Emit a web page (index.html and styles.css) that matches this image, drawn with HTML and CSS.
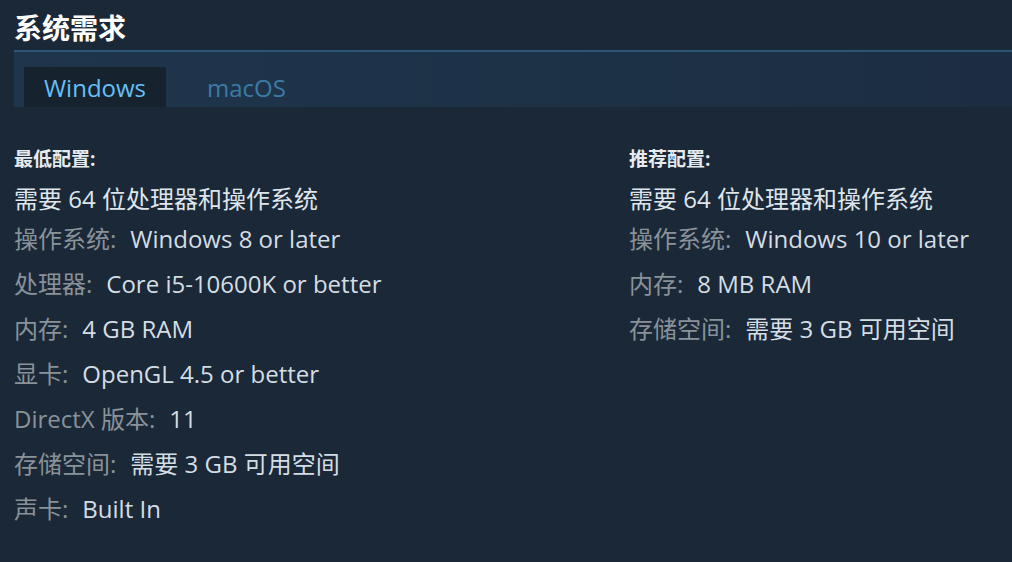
FILE: index.html
```html
<!DOCTYPE html>
<html lang="zh-CN">
<head>
<meta charset="utf-8">
<title>系统需求</title>
<link rel="stylesheet" href="styles.css">
</head>
<body>
<div class="sysreq">
  <h2 class="title">系统需求</h2>
  <div class="tabbar">
    <div class="tab active">Windows</div>
    <div class="tab">macOS</div>
  </div>
  <div class="columns">
    <div class="col col-min">
      <div class="col-head">最低配置:</div>
      <div class="req-note">需要 64 位处理器和操作系统</div>
      <ul class="reqs">
        <li><span class="lbl">操作系统:</span><span class="val">Windows 8 or later</span></li>
        <li><span class="lbl">处理器:</span><span class="val">Core i5-10600K or better</span></li>
        <li><span class="lbl">内存:</span><span class="val">4 GB RAM</span></li>
        <li><span class="lbl">显卡:</span><span class="val">OpenGL 4.5 or better</span></li>
        <li><span class="lbl">DirectX 版本:</span><span class="val">11</span></li>
        <li><span class="lbl">存储空间:</span><span class="val">需要 3 GB 可用空间</span></li>
        <li><span class="lbl">声卡:</span><span class="val">Built In</span></li>
      </ul>
    </div>
    <div class="col col-rec">
      <div class="col-head">推荐配置:</div>
      <div class="req-note">需要 64 位处理器和操作系统</div>
      <ul class="reqs">
        <li><span class="lbl">操作系统:</span><span class="val">Windows 10 or later</span></li>
        <li><span class="lbl">内存:</span><span class="val">8 MB RAM</span></li>
        <li><span class="lbl">存储空间:</span><span class="val">需要 3 GB 可用空间</span></li>
      </ul>
    </div>
  </div>
</div>
</body>
</html>
```
FILE: styles.css
```css
html, body {
  margin: 0;
  padding: 0;
  background: #1b2838;
  height: 100%;
}
body {
  font-family: "Open Sans", "Noto Sans CJK SC", sans-serif;
  color: #c6d4df;
  overflow: hidden;
}
.sysreq {
  padding-left: 14px;
}
.title {
  margin: 0;
  padding-top: 11px;
  height: 50px;
  box-sizing: border-box;
  font-size: 28px;
  line-height: 34px;
  font-weight: 700;
  color: #ffffff;
}
.tabbar {
  display: flex;
  align-items: flex-end;
  height: 57px;
  box-sizing: border-box;
  border-top: 2px solid #2c5676;
  background: linear-gradient(90deg, #1f354b 0%, #1d3247 50%, #1c2d41 100%);
  padding-left: 10px;
}
.tab {
  height: 40px;
  display: flex;
  align-items: center;
  justify-content: center;
  font-size: 24px;
  color: #3c7aa6;
  padding: 0 20px;
}
.tab.active {
  width: 142px;
  padding: 0;
  background: #17222f;
  color: #66c0f4;
  margin-right: 21px;
}
.columns {
  display: flex;
  padding-top: 40px;
}
.col-min {
  flex: 0 0 615px;
}
.col-rec {
  flex: 1 1 auto;
  min-width: 0;
}
.col-head {
  font-size: 19px;
  font-weight: 700;
  color: #e6ebef;
  line-height: 24px;
}
.req-note {
  font-size: 24px;
  line-height: 34px;
  margin-top: 11px;
  color: #dfe5ea;
}
.reqs {
  list-style: none;
  margin: 0;
  padding: 0;
}
.reqs li {
  font-size: 24px;
  line-height: 45px;
  white-space: nowrap;
}
.lbl {
  color: #8a9299;
}
.val {
  color: #d4dde4;
  margin-left: 14px;
}
```
